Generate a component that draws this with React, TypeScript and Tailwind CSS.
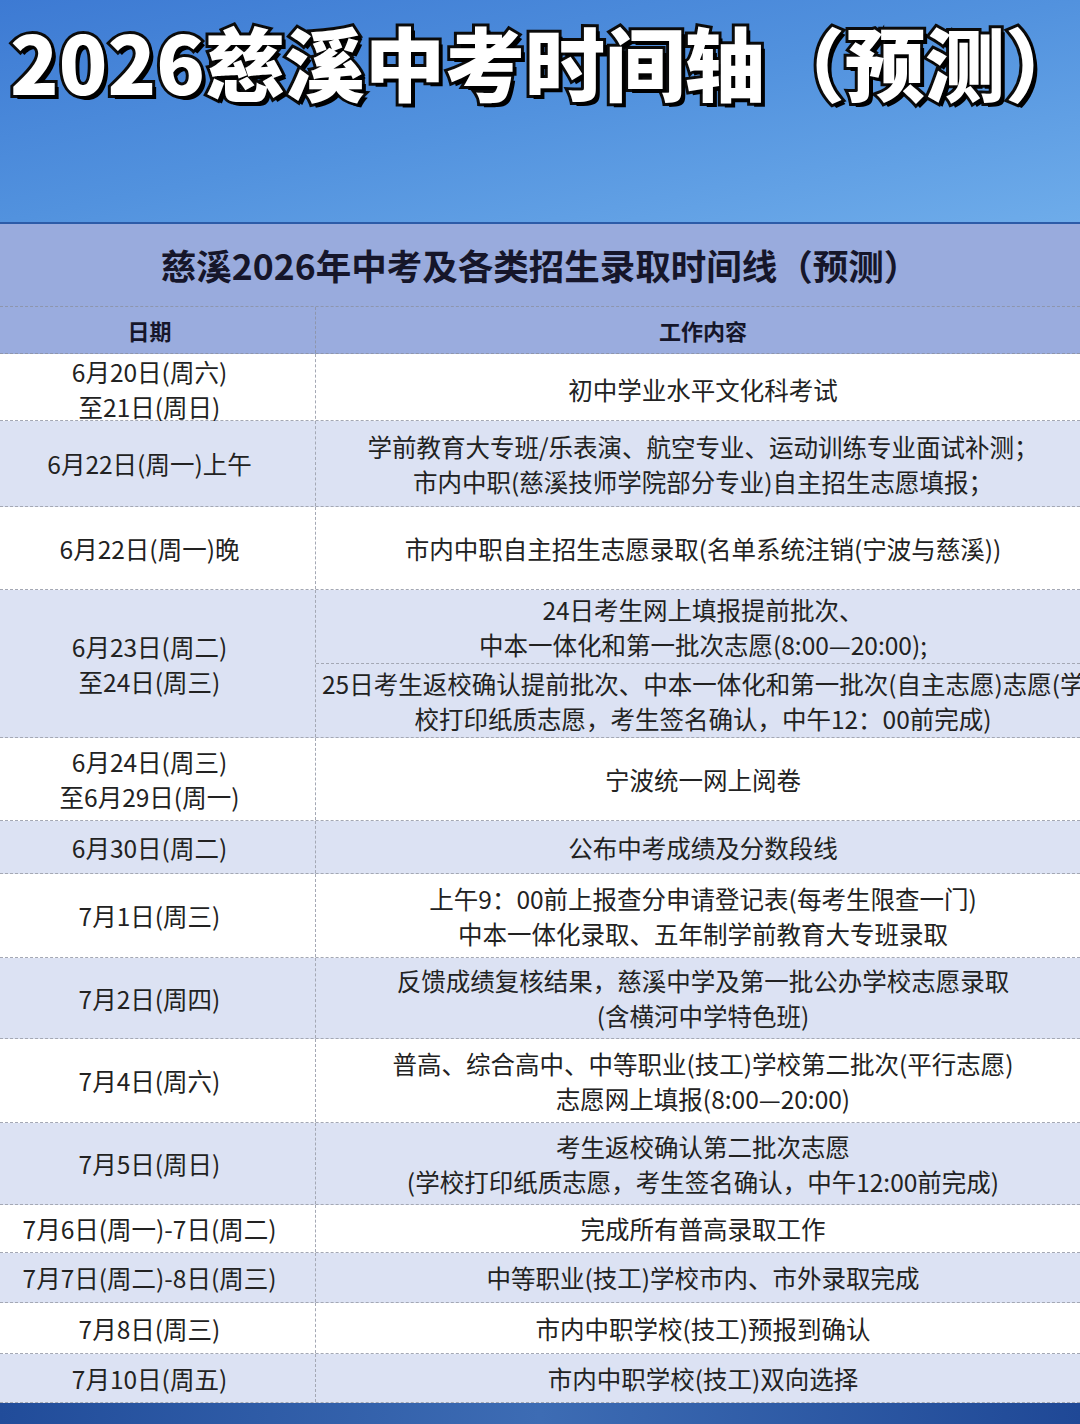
type Row = {
  h: string;
  tint: boolean;
  date: string[];
  work: string[][];
};

const rows: Row[] = [
  { h: "h-[67px]", tint: false, date: ["6月20日(周六)", "至21日(周日)"], work: [["初中学业水平文化科考试"]] },
  {
    h: "h-[86px]",
    tint: true,
    date: ["6月22日(周一)上午"],
    work: [["学前教育大专班/乐表演、航空专业、运动训练专业面试补测；", "市内中职(慈溪技师学院部分专业)自主招生志愿填报；"]],
  },
  { h: "h-[83px]", tint: false, date: ["6月22日(周一)晚"], work: [["市内中职自主招生志愿录取(名单系统注销(宁波与慈溪))"]] },
  {
    h: "h-[148px]",
    tint: true,
    date: ["6月23日(周二)", "至24日(周三)"],
    work: [
      ["24日考生网上填报提前批次、", "中本一体化和第一批次志愿(8:00—20:00);"],
      ["25日考生返校确认提前批次、中本一体化和第一批次(自主志愿)志愿(学", "校打印纸质志愿，考生签名确认，中午12：00前完成)"],
    ],
  },
  { h: "h-[83px]", tint: false, date: ["6月24日(周三)", "至6月29日(周一)"], work: [["宁波统一网上阅卷"]] },
  { h: "h-[53px]", tint: true, date: ["6月30日(周二)"], work: [["公布中考成绩及分数段线"]] },
  {
    h: "h-[84px]",
    tint: false,
    date: ["7月1日(周三)"],
    work: [["上午9：00前上报查分申请登记表(每考生限查一门)", "中本一体化录取、五年制学前教育大专班录取"]],
  },
  {
    h: "h-[81px]",
    tint: true,
    date: ["7月2日(周四)"],
    work: [["反馈成绩复核结果，慈溪中学及第一批公办学校志愿录取", "(含横河中学特色班)"]],
  },
  {
    h: "h-[84px]",
    tint: false,
    date: ["7月4日(周六)"],
    work: [["普高、综合高中、中等职业(技工)学校第二批次(平行志愿)", "志愿网上填报(8:00—20:00)"]],
  },
  {
    h: "h-[82px]",
    tint: true,
    date: ["7月5日(周日)"],
    work: [["考生返校确认第二批次志愿", "(学校打印纸质志愿，考生签名确认，中午12:00前完成)"]],
  },
  { h: "h-[48px]", tint: false, date: ["7月6日(周一)-7日(周二)"], work: [["完成所有普高录取工作"]] },
  { h: "h-[50px]", tint: true, date: ["7月7日(周二)-8日(周三)"], work: [["中等职业(技工)学校市内、市外录取完成"]] },
  { h: "h-[51px]", tint: false, date: ["7月8日(周三)"], work: [["市内中职学校(技工)预报到确认"]] },
  { h: "h-[49px]", tint: true, date: ["7月10日(周五)"], work: [["市内中职学校(技工)双向选择"]] },
];

function WorkCell({ lines, overflow }: { lines: string[]; overflow: boolean }) {
  return (
    <div className="flex flex-1 flex-col justify-center overflow-hidden leading-[35px]">
      {lines.map((l, i) =>
        overflow && i === 0 ? (
          <div key={i} className="whitespace-nowrap pl-[6px]">
            {l}
          </div>
        ) : (
          <div key={i} className="whitespace-nowrap pl-[10px] text-center">
            {l}
          </div>
        ),
      )}
    </div>
  );
}

export default function App() {
  return (
    <div className="flex h-[1424px] w-[1080px] flex-col overflow-hidden bg-white font-['Noto_Sans_CJK_SC',sans-serif] text-[#222]">
      <header className="flex h-[224px] shrink-0 items-start overflow-hidden border-b-2 border-[#2c5ba8] bg-gradient-to-br from-[#3d7ad3] via-[#5292de] to-[#6eacea] pl-[10px] pt-[4px]">
        <h1 className="whitespace-nowrap text-[80px] font-black leading-[112px] text-white [-webkit-text-stroke:6px_#0b0b0b] [paint-order:stroke_fill] [text-shadow:4px_4px_0_#000]">
          2026慈溪中考时间轴（预测）
        </h1>
      </header>

      <div className="flex h-[82px] shrink-0 items-center justify-center bg-[#99abdd] text-[35.5px] font-bold text-[#16162a]">
        慈溪2026年中考及各类招生录取时间线（预测）
      </div>

      <div className="grid h-[48px] shrink-0 grid-cols-[316px_1fr] border-y border-dashed border-[#8e96ad] bg-[#9aacde] text-[22px] font-bold text-[#16162a]">
        <div className="flex items-center justify-center border-r border-dashed border-[#8e96ad] pl-[4px] pr-[20px]">日期</div>
        <div className="flex items-center justify-center pl-[10px]">工作内容</div>
      </div>

      {rows.map((r, i) => (
        <div
          key={i}
          className={`grid shrink-0 grid-cols-[316px_1fr] border-b border-dashed border-[#a4a8b4] text-[24.5px] ${r.h} ${
            r.tint ? "bg-[#dce2f3]" : "bg-white"
          }`}
        >
          <div className="flex flex-col items-center justify-center border-r border-dashed border-[#a4a8b4] pr-[16px] leading-[35px]">
            {r.date.map((d, j) => (
              <div key={j} className="whitespace-nowrap">
                {d}
              </div>
            ))}
          </div>
          <div className="flex min-w-0 flex-col">
            {r.work.map((w, j) => (
              <div
                key={j}
                className={`flex flex-1 min-w-0 ${j > 0 ? "border-t border-dashed border-[#a4a8b4]" : ""}`}
              >
                <WorkCell lines={w} overflow={j === 1} />
              </div>
            ))}
          </div>
        </div>
      ))}

      <div className="flex-1 bg-gradient-to-r from-[#214c9a] via-[#3d6cb4] to-[#1f4896]" />
    </div>
  );
}
